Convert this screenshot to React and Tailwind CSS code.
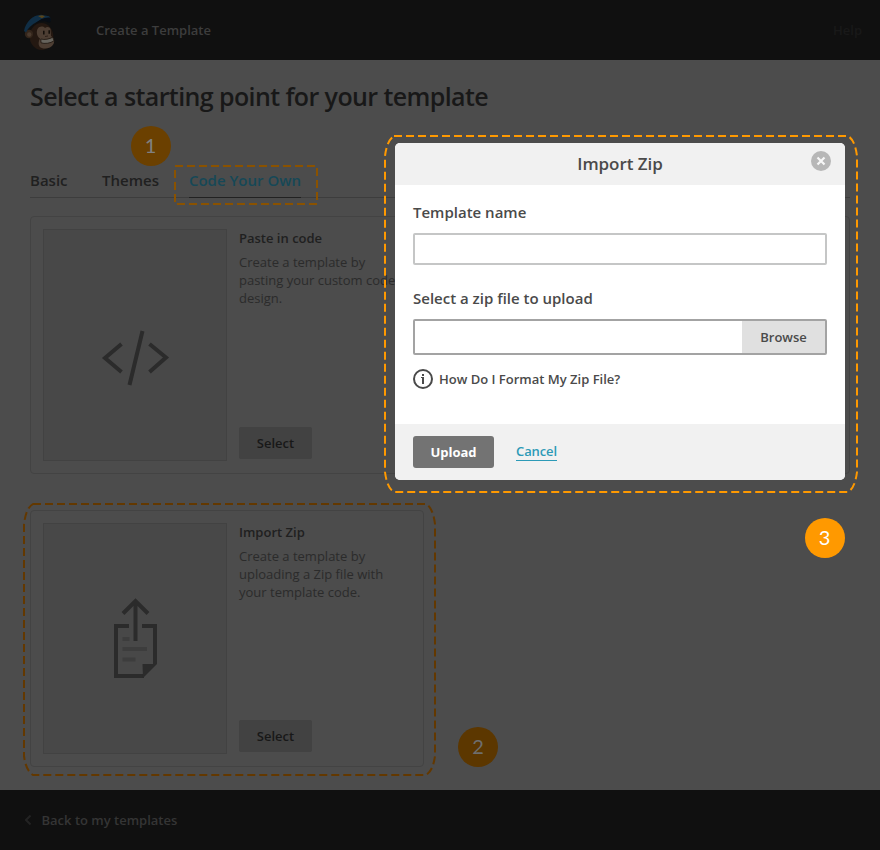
function Logo() {
  return (
    <svg className="h-10 w-8" viewBox="0 0 32 40" aria-hidden="true">
      <ellipse cx="17.5" cy="25.500" rx="11.800" ry="13.500" fill="#241811" />
      <circle cx="5" cy="23" r="4.200" fill="#33251b" />
      <circle cx="5.300" cy="23.500" r="2.200" fill="#4a3a2e" />
      <path d="M13.500 18c2-3 5.500-3 7.500-1 2-2 5-1 5.500 1l.5 7c3 2 4 5 2.500 8-2.500 5-11 6-14 2.500-1.500-2-1-5.500.5-8-3-2-4-6-2.500-9.500z" fill="#4d3e33" />
      <path d="M16.800 28c4 1.200 8.500 0 12-1.800l1.200 3.600c-3.500 2.600-9.500 3.300-13 2z" fill="#66635c" stroke="#1d140e" strokeWidth=".8" />
      <path d="M19.800 19.800v3.600M25.200 19.300v3.400" stroke="#120d09" strokeWidth="1.500" />
      <path d="M21 25.500l3-.5" stroke="#241811" strokeWidth=".8" />
      <path d="M0 20C1.500 11 9 4 17 3.800l8 1.400c2 1.500 2.200 4.500.7 5.800-4-3-9-2-13 0C8 13.500 4 17 2 21.500z" fill="#102e45" />
      <path d="M11.500 12.500c4-4.500 9-6.500 14.500-6 1.500 1.500 1 4-.5 5.500-4-2.500-9.500-2-14 .5z" fill="#080d14" />
      <path d="M14 5l4-.8 3 1-3 2z" fill="#59451b" />
    </svg>
  );
}

function CodeIcon() {
  return (
    <svg className="h-[58px] w-[70px]" viewBox="0 0 70 58" fill="none" stroke="#2b2b2b" strokeWidth="4">
      <path d="M21.500 16L5 30l16.500 14M49.500 16L66 29.500 49.500 44M42.500 3L29.500 57" />
    </svg>
  );
}

function UploadIcon() {
  return (
    <svg className="h-[82px] w-[46px]" viewBox="0 0 46 82" fill="none">
      <path d="M17 29H4v50h28M30 29h13v38" stroke="#2b2b2b" strokeWidth="4" />
      <path d="M30.500 67H45L31 81z" fill="#2b2b2b" />
      <path d="M23.500 44V4M11 16.500L23.500 4 36 16.500" stroke="#2b2b2b" strokeWidth="4" />
      <path d="M10.500 42h7M10.500 52H35M10.500 62.500h13" stroke="#3d3d3d" strokeWidth="4" />
    </svg>
  );
}

function TemplateCard({ title, lines, icon, height }) {
  return (
    <section className={`flex rounded-[4px] border border-[#434343] p-3 ${height}`}>
      <div className="flex w-[184px] shrink-0 justify-center border border-[#424242] bg-[#484848]">
        {icon}
      </div>
      <div className="ml-3 flex flex-col items-start">
        <h2 className="text-[13px] leading-[18px] font-semibold text-[#202020]">{title}</h2>
        <p className="mt-1.5 text-[13px] leading-[18px] whitespace-nowrap text-[#2b2b2b]">
          {lines.map((line) => (
            <span key={line} className="block">{line}</span>
          ))}
        </p>
        <button className="mt-auto mb-[2px] h-8 w-[73px] rounded-[2px] bg-[#424242] pt-px text-[13px] font-semibold text-[#181818]">
          Select
        </button>
      </div>
    </section>
  );
}

function Modal() {
  return (
    <div className="absolute top-[143px] left-[395px] flex h-[337px] w-[450px] flex-col overflow-hidden rounded-[5px] bg-white text-[#4a4a4a]">
      <header className="relative flex h-[42px] items-center justify-center bg-[#f1f1f1]">
        <h2 className="text-[17px] font-semibold tracking-[-0.05px]">Import Zip</h2>
        <svg className="absolute top-2 right-[14px] size-5" viewBox="0 0 20 20">
          <circle cx="10" cy="10" r="10" fill="#b7b7b7" />
          <path d="M6.500 6.500l7 7m0-7l-7 7" stroke="#f7f7f7" strokeWidth="2.200" />
        </svg>
      </header>
      <div className="flex flex-1 flex-col px-[18px] pt-[17px]">
        <label className="text-[15px] leading-5 font-semibold">Template name</label>
        <div className="mt-[11px] h-8 rounded-[2px] border-2 border-[#c5c6c6]" />
        <label className="mt-[23px] text-[15px] leading-5 font-semibold">Select a zip file to upload</label>
        <div className="mt-[11px] flex h-9 justify-end rounded-[2px] border-2 border-[#a3a3a3]">
          <button className="w-[83px] bg-[#e0e0e0] pt-px text-[13px] font-semibold">Browse</button>
        </div>
        <div className="mt-[14px] flex h-5 items-center gap-[6px] text-[13px] font-semibold">
          <svg className="size-5" viewBox="0 0 20 20">
            <circle cx="10" cy="10" r="9" fill="none" stroke="#4a4a4a" strokeWidth="2" />
            <path d="M9 5h2v2H9zM8 8h3v7H9V9H8z" fill="#4a4a4a" />
          </svg>
          <span className="pt-0.5">How Do I Format My Zip File?</span>
        </div>
      </div>
      <footer className="flex h-14 items-center bg-[#f1f1f1] px-[18px]">
        <button className="h-8 w-[81px] rounded-[3px] bg-[#737373] pt-px text-[13px] font-bold text-white">Upload</button>
        <span className="ml-[22px] border-b border-[#2c9ab7] text-[13px] leading-[17px] font-semibold tracking-[-0.1px] text-[#2c9ab7]">Cancel</span>
      </footer>
    </div>
  );
}

function Annotations() {
  return (
    <svg className="pointer-events-none absolute inset-0 h-[850px] w-[880px]" viewBox="0 0 880 850" fill="none" strokeWidth="2" strokeDasharray="8 4">
      <path d="M175 166H317V204H175Z" stroke="#8a5200" />
      <path d="M33 504H426Q433 508 435 524V756Q433 771 426 775H33Q26 771 24 756V524Q26 508 33 504Z" stroke="#633800" />
      <path d="M394 136H848Q855 140 857 156V472Q855 488 848 492H394Q387 488 385 472V156Q387 140 394 136Z" stroke="#ff9900" />
    </svg>
  );
}

function Badge({ children, className }) {
  return (
    <div className={`absolute flex size-10 items-center justify-center rounded-full pb-0.5 font-['Lato','Open_Sans',sans-serif] text-[20px] leading-none ${className}`}>
      {children}
    </div>
  );
}

export default function App() {
  return (
    <div className="relative flex h-[850px] w-[880px] flex-col overflow-hidden bg-[#4c4c4c] font-['Open_Sans','Noto_Sans',sans-serif]">
      <header className="flex h-[60px] shrink-0 items-center bg-[#101010] pt-0.5 pr-[18px] pl-6">
        <Logo />
        <span className="ml-10 text-[13px] font-semibold text-[#3d3d3d]">Create a Template</span>
        <span className="ml-auto text-[13px] font-semibold text-[#191919]">Help</span>
      </header>
      <main className="flex-1 px-[30px] pt-[19px]">
        <h1 className="text-[25px] leading-[34px] font-semibold tracking-[-0.6px] text-[#181818]">
          Select a starting point for your template
        </h1>
        <nav className="mt-[55px] flex h-[30px] gap-[34.5px] border-b border-[#3d3d3d] text-[15px] leading-6 font-semibold text-[#202020]">
          <span>Basic</span>
          <span>Themes</span>
          <span className="-ml-[4.5px] h-[30px] border-b border-[#222] text-[#164857]">Code Your Own</span>
        </nav>
        <div className="mt-[18px] grid grid-cols-[394px_394px] gap-x-8 gap-y-9">
          <TemplateCard
            title="Paste in code"
            height="h-[258px]"
            lines={["Create a template by", "pasting your custom code", "design."]}
            icon={<div className="pt-[98px]"><CodeIcon /></div>}
          />
          <section className="rounded-[4px] border border-[#434343]" />
          <TemplateCard
            title="Import Zip"
            height="h-[257px]"
            lines={["Create a template by", "uploading a Zip file with", "your template code."]}
            icon={<div className="pt-[73px]"><UploadIcon /></div>}
          />
        </div>
      </main>
      <footer className="flex h-[60px] shrink-0 items-center bg-[#101010] pl-[25px] text-[13px] font-semibold text-[#353535]">
        <svg className="mr-[10.5px] h-[10px] w-[6px]" viewBox="0 0 6 10" fill="none" stroke="#232323" strokeWidth="2">
          <path d="M5.500 .5L1 5l4.500 4.500" />
        </svg>
        <span className="pt-px">Back to my templates</span>
      </footer>
      <Annotations />
      <Modal />
      <Badge className="top-[126px] left-[131px] bg-[#6b4000] pr-px text-[#808080]">1</Badge>
      <Badge className="top-[727px] left-[458px] bg-[#5c3700] text-[#6e6e6e]">2</Badge>
      <Badge className="top-[518px] left-[805px] bg-[#ff9900] pr-px text-white">3</Badge>
    </div>
  );
}
